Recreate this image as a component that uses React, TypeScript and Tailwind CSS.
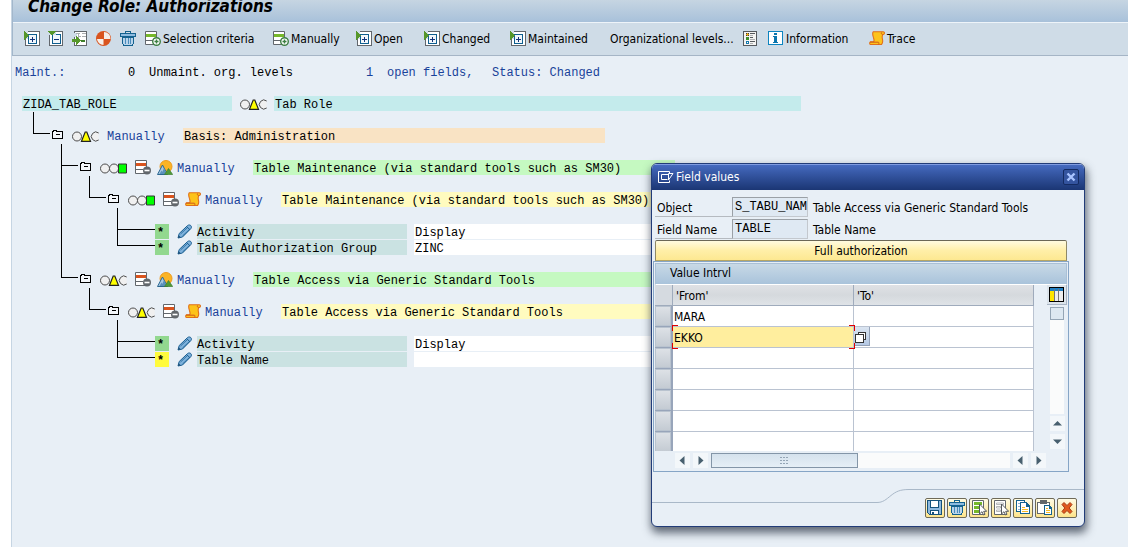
import { useState } from "react";
import type { ReactNode } from "react";

const UI = "font-['DejaVu_Sans_Condensed','DejaVu_Sans',sans-serif]";
const MONO = "font-['Liberation_Mono',monospace]";

type IconProps = { children: ReactNode; label?: string };

function Icon({ children, label }: IconProps) {
  return (
    <svg
      className="block h-4 w-4 shrink-0"
      viewBox="0 0 16 16"
      shapeRendering="crispEdges"
      role={label ? "img" : undefined}
      aria-label={label}
      aria-hidden={label ? undefined : true}
    >
      {children}
    </svg>
  );
}

function ExpandIcon() {
  return (
    <Icon>
      <rect x="1.5" y=".5" width="14" height="14" fill="#fff" stroke="#62676c" />
      <rect x="4.5" y="3.5" width="8" height="9" fill="#f2f7fb" stroke="#0f5f8f" />
      <path d="M8.500 6v5M6 8.500h5" stroke="#12337a" />
      <path d="M0 0h4v8H0z" fill="#cfdce7" />
      <path d="M0 0h1v1h1v1h1v1h1v1h1v1H4v1H3v1H2v1H1v1H0z" fill="#56972a" />
    </Icon>
  );
}

function CollapseIcon() {
  return (
    <Icon>
      <rect x="1.5" y=".5" width="13" height="14" fill="#fff" stroke="#62676c" />
      <rect x="4.5" y="3.5" width="8" height="9" fill="#f2f7fb" stroke="#0f5f8f" />
      <path d="M6 8.500h5" stroke="#12337a" />
      <path d="M0 0h8v4H0z" fill="#cfdce7" />
      <path d="M0 0h8v1H7v1H6v1H5v1H3V3H2V2H1V1H0z" fill="#56972a" />
    </Icon>
  );
}

function InsertTreeIcon() {
  return (
    <Icon>
      <rect x="2.5" y=".5" width="12" height="14" fill="#fff" stroke="#62676c" />
      <path d="M2 2h3v4H2z" fill="#cfdce7" />
      <path d="M4 2.500h4M10 2.500h4M6.500 2v5M7 5.500h2M10 5.500h4" stroke="#a9adb0" />
      <path d="M9 9h4v2H9z" fill="#3f7f2c" />
      <path d="M0 8h4V5h1v1h1v1h1v1h1v1h1v1H8v1H7v1H6v1H5v1H4v-3H0z" fill="#56972a" />
    </Icon>
  );
}

function QuarterIcon() {
  return (
    <svg className="block h-4 w-4 shrink-0" viewBox="0 0 16 16" aria-hidden>
      <circle cx="7.500" cy="7.500" r="7.500" fill="#d9541e" />
      <path d="M8 1a6.500 6.500 0 0 1 6.500 7H8zM7.500 14A6.500 6.500 0 0 1 1 8h6.500z" fill="#f6efe9" />
    </svg>
  );
}

function TrashIcon() {
  return (
    <Icon>
      <path d="M2.500 6h11v6l-1 2.500h-9l-1-2.500z" fill="#b9d4ea" stroke="#14628f" />
      <path d="M5.500 7v6M8 7v6M10.500 7v6" stroke="#4a8cbc" />
      <path d="M0 2h16v4H0z" fill="#14628f" />
      <path d="M1 3h14v2H1z" fill="#8dbbe0" />
      <path d="M5.500 2V.5h5V2" fill="none" stroke="#14628f" />
    </Icon>
  );
}

function RowAddIcon() {
  return (
    <svg className="block h-4 w-4 shrink-0" viewBox="0 0 16 16" aria-hidden>
      <path d="M.5.500h11v13H.5z" fill="#fff" stroke="#62676c" />
      <path d="M1 3h10v3H1z" fill="#76b82a" />
      <path d="M1 9.500h9" stroke="#62676c" />
      <circle cx="11.500" cy="10.500" r="3.800" fill="#fff" stroke="#3d7f42" strokeWidth="1.400" />
      <path d="M11.500 8.500v4M9.500 10.500h4" stroke="#3d7f42" strokeWidth="1.400" />
    </svg>
  );
}

function RowRemoveIcon() {
  return (
    <svg className="block h-4 w-4 shrink-0" viewBox="0 0 16 16" aria-hidden>
      <path d="M.5.500h11v13H.5z" fill="#fff" stroke="#62676c" />
      <path d="M1 3h10v3H1z" fill="#d9541e" />
      <path d="M1 9.500h7" stroke="#62676c" />
      <circle cx="12" cy="10.500" r="4" fill="#62676c" />
      <path d="M9.500 10.500h5" stroke="#fff" strokeWidth="1.600" />
    </svg>
  );
}

function LegendIcon() {
  return (
    <Icon>
      <rect x=".5" y=".5" width="13" height="14" fill="#f4f4f2" stroke="#55595d" />
      <path d="M3 2h3v3H3z" fill="#e8a81c" />
      <path d="M3 2h1v1H3zM5 2h1v1H5zM3 4h1v1H3zM5 4h1v1H5z" fill="#3b3b3b" />
      <path d="M3 6h3v3H3z" fill="#3f8f2c" />
      <path d="M3 10h3v3H3z" fill="#1678ac" />
      <path d="M4 11h1v1H4z" fill="#fff" />
      <path d="M7 2.500h5M7 6.500h3M7 10.500h5" stroke="#55595d" />
      <path d="M7 4.500h3M7 8.500h5M7 12.500h3" stroke="#b0b2b4" />
    </Icon>
  );
}

function InfoIcon() {
  return (
    <Icon>
      <rect x=".5" y=".5" width="14" height="13" fill="#fff" stroke="#0c84c0" />
      <path d="M6 2h3v2H6zM5 5h4v6h1v1H5v-1h1V6H5z" fill="#0a75ae" />
    </Icon>
  );
}

function ScrollIcon() {
  return (
    <svg className="block h-4 w-4 shrink-0" viewBox="0 0 16 16" aria-hidden>
      <path
        d="M4.200.8h10c1 0 1.400.8 1.200 1.700-.2 1-.9 1.200-1.700 1.200-.8 1.500-.6 3-.2 4.600.4 2 .4 3.700-1 5.200H1.400C.5 13.500.3 11 1.500 10.700h3.200c.6-1.300.3-2.700-.2-4C3.900 4.800 3 2.200 4.200.8z"
        fill="#fdc31a"
        stroke="#e0701c"
        strokeWidth="1.100"
      />
      <path d="M1 11.200h8.500c.6.700.5 1.700-.2 2.300" fill="none" stroke="#cf5a1a" />
      <path d="M12.500 1.500c-.6.900.1 2 1.200 2" fill="none" stroke="#cf5a1a" />
    </svg>
  );
}

function MountainIcon() {
  return (
    <svg className="block h-4 w-4 shrink-0" viewBox="0 0 16 16" aria-hidden>
      <circle cx="9" cy="6.500" r="6" fill="#fbb425" stroke="#ee9a1e" />
      <path d="M.5 14.500 5.500 5l5 9.500z" fill="#a8c8e2" stroke="#2a6791" />
      <path d="m2.500 14 2-3.500.8 1.500L7 8l3 6z" fill="#5a91bb" />
      <path d="m7.500 14.500 4-6 4.200 6z" fill="#4f9a38" stroke="#3d7f30" strokeWidth=".7" />
    </svg>
  );
}

function PencilIcon() {
  return (
    <svg className="block h-4 w-4 shrink-0" viewBox="0 0 16 16" aria-hidden>
      <path d="m1 14 1.200-4.500L10.500 1.600c1-.9 2.600-.8 3.300 0 .9.900.8 2.100 0 3.100L5.500 13z" fill="#7fb2dc" stroke="#1b5f92" />
      <path d="m3.500 10 7.500-7M5.500 12l7.500-7" stroke="#1b5f92" strokeWidth=".8" />
      <path d="m1 14 .7-2.700 2 2z" fill="#1b4d74" />
      <path d="m9.500 2.500 3.400 3.200" stroke="#1b5f92" />
    </svg>
  );
}

function FolderIcon() {
  return (
    <svg className="block h-[9px] w-3 shrink-0" viewBox="0 0 12 9" shapeRendering="crispEdges" aria-hidden>
      <path d="M.5 8V1.500h1V.5h3v1h6V8z" fill="#f3f6fa" stroke="#000" />
      <path d="M4 4.500h4" stroke="#000" />
    </svg>
  );
}

type Light = "yellow" | "green";

function TrafficLight({ state }: { state: Light }) {
  return (
    <svg className="block h-[11px] w-7 shrink-0" viewBox="0 0 28 11" role="img" aria-label={state + " light"}>
      <circle cx="5" cy="5.500" r="4.500" fill="#f0f0f0" stroke="#4d4d4d" />
      {state === "yellow" ? (
        <>
          <path d="M26.700 2a4.500 4.500 0 1 0 0 7" fill="#f0f0f0" stroke="#4d4d4d" />
          <path d="M9.500 10.300 13.200 1h1.600l3.700 9.300z" fill="#ff0" stroke="#222" strokeWidth="1.200" />
        </>
      ) : (
        <>
          <circle cx="14" cy="5.500" r="4.500" fill="#f0f0f0" stroke="#4d4d4d" />
          <path d="M18.500 1h8v9h-8z" fill="#0f0" stroke="#333" />
        </>
      )}
    </svg>
  );
}

function ToolButton({ icon, text, label, className }: { icon?: ReactNode; text?: string; label?: string; className?: string }) {
  return (
    <button
      type="button"
      aria-label={label}
      className={`flex h-6 shrink-0 items-center gap-0.5 whitespace-nowrap text-[12px] leading-4 text-black ${className ?? ""}`}
    >
      {icon}
      {text && <span>{text}</span>}
    </button>
  );
}

type Guide = "none" | "line" | "tee" | "elbow";

function GuideCell({ kind, last, leaf, short }: { kind: Guide; last: boolean; leaf: boolean; short: boolean }) {
  const width = last ? (leaf ? "w-[38px]" : "w-[19px]") : "w-7";
  const joined = kind === "tee" || kind === "elbow";
  const arm = leaf ? "w-full" : "w-[17px]";
  return (
    <span className={`flex h-full shrink-0 flex-col ${width}`}>
      <span
        className={`${short ? "h-1.5" : "h-[22px]"} ${arm} ${kind !== "none" ? "border-l border-black" : ""} ${joined ? "border-b" : ""}`}
      />
      <span className={`flex-1 ${kind === "line" || kind === "tee" ? "border-l border-black" : ""}`} />
    </span>
  );
}

type Node = {
  guides: Guide[];
  short?: boolean;
  light?: Light;
  kind: "class" | "object" | "auth" | "field";
  text: string;
  value?: string;
  open?: boolean;
};

const nodes: Node[] = [
  { guides: ["elbow"], light: "yellow", kind: "class", text: "Basis: Administration" },
  { guides: ["none", "tee"], light: "green", kind: "object", text: "Table Maintenance (via standard tools such as SM30)" },
  { guides: ["none", "line", "elbow"], light: "green", kind: "auth", text: "Table Maintenance (via standard tools such as SM30)" },
  { guides: ["none", "line", "none", "tee"], kind: "field", text: "Activity", value: "Display" },
  { guides: ["none", "line", "none", "elbow"], short: true, kind: "field", text: "Table Authorization Group", value: "ZINC" },
  { guides: ["none", "elbow"], light: "yellow", kind: "object", text: "Table Access via Generic Standard Tools" },
  { guides: ["none", "none", "elbow"], light: "yellow", kind: "auth", text: "Table Access via Generic Standard Tools" },
  { guides: ["none", "none", "none", "tee"], kind: "field", text: "Activity", value: "Display" },
  { guides: ["none", "none", "none", "elbow"], short: true, kind: "field", text: "Table Name", value: "", open: true },
];

const barTone = {
  class: "w-[422px] bg-[#f9e3c4]",
  object: "w-[422px] bg-[#c5f9c1]",
  auth: "w-[422px] bg-[#fffbbf]",
  field: "",
};

function TreeRow({ node }: { node: Node }) {
  const leaf = node.kind === "field";
  return (
    <li className={`flex ${node.short ? "h-4" : "h-8"}`}>
      {node.guides.map((g, i) => (
        <GuideCell key={i} kind={g} last={i === node.guides.length - 1} leaf={leaf} short={!!node.short} />
      ))}
      <div className="flex h-4 items-center self-end whitespace-nowrap leading-[18px]">
        {leaf ? (
          <>
            <span className={`mb-px h-[15px] w-3.5 pl-0.5 font-bold ${node.open ? "bg-[#fffb3c]" : "bg-[#92d88f]"}`}>*</span>
            <span className="ml-2 mr-1">
              <PencilIcon />
            </span>
            <span className="mb-px h-[15px] w-[210px] bg-[#cae2e2]">{node.text}</span>
            <span className="mb-px ml-[7px] h-[15px] w-[280px] bg-white pl-px">{node.value}</span>
          </>
        ) : (
          <>
            <button type="button" aria-label={`Collapse ${node.text}`} className="mb-1 mr-2">
              <FolderIcon />
            </button>
            <TrafficLight state={node.light ?? "yellow"} />
            {node.kind !== "class" && (
              <span className="ml-[7px] flex gap-[6px]">
                <RowRemoveIcon />
                {node.kind === "object" ? <MountainIcon /> : <ScrollIcon />}
              </span>
            )}
            <span className={`h-4 w-[73px] text-[#19429a] ${node.kind === "class" ? "ml-[7px]" : "ml-1"}`}>Manually</span>
            <span className={`mb-px ml-[3px] h-[15px] pl-px ${barTone[node.kind]}`}>{node.text}</span>
          </>
        )}
      </div>
    </li>
  );
}

function Arrow({ dir }: { dir: "left" | "right" | "up" | "down" }) {
  const d = {
    left: "M9.500 3v9L4.500 7.500z",
    right: "M5.500 3v9l5-4.500z",
    up: "M3 9.500h9L7.500 5z",
    down: "M3 5.500h9L7.500 10z",
  }[dir];
  return (
    <button type="button" aria-label={`Scroll ${dir}`} className="h-[15px] w-[15px] shrink-0 bg-[#f3f7fa]">
      <svg className="block h-full w-full" viewBox="0 0 15 15" aria-hidden>
        <path d={d} fill="#48606f" />
      </svg>
    </button>
  );
}

function SaveIcon() {
  return (
    <Icon>
      <path d="M.5.500h14v14h-12l-2-2z" fill="#8db8de" stroke="#14527c" />
      <path d="M3.500.500h8v7h-8z" fill="#fff" stroke="#14527c" />
      <path d="M3.500 10.500h8v4h-8z" fill="#fff" stroke="#14527c" />
      <path d="M5 12h2v2H5z" fill="#14527c" />
    </Icon>
  );
}

function SelectIcon({ on }: { on: boolean }) {
  return (
    <svg className="block h-4 w-4" viewBox="0 0 16 16" aria-hidden>
      <path d="M1.500.5h11v14h-11z" fill="#fff" stroke="#62676c" />
      {on ? (
        <path d="M3 2h8v3H3zM3 6h5v3H3zM3 10h5v3H3z" fill="#76b82a" />
      ) : (
        <path d="M3.500 3h7v1.500h-7zM3.500 6.500h4v1.500h-4zM3.500 10h4v1.500h-4z" fill="#fff" stroke="#a4a7aa" strokeWidth=".8" />
      )}
      <path d="M8.500 4v10l2.500-2.300L12.500 15l1.500-.7-1.300-3h3z" fill="#fff" stroke="#55595d" />
    </svg>
  );
}

function CopyIcon() {
  return (
    <Icon>
      <path d="M1.500.5h8v11h-8z" fill="#fff" stroke="#14628f" />
      <path d="M3 3.500h2M3 6.500h2M3 9.500h2" stroke="#8db5d4" />
      <path d="M5.500 2.500h6v1h1v1h1v1h1v8h-9z" fill="#fff" stroke="#14628f" />
      <path d="M11 3h1v1h1v1h1v2h-3z" fill="#14628f" />
      <path d="M7 7.500h3M7 9.500h6M7 11.500h6" stroke="#f5ba22" />
    </Icon>
  );
}

function PasteIcon() {
  return (
    <Icon>
      <path d="M.5 2.500h12v11H.5z" fill="#fff" stroke="#62676c" />
      <path d="M3 0h7v4H3z" fill="#62676c" />
      <path d="M7.500 5.500h5v1h1v1h1v7h-7z" fill="#fff" stroke="#14628f" />
      <path d="M12 6h1v1h1v2h-2z" fill="#14628f" />
      <path d="M9 8.500h2M9 10.500h4M9 12.500h4" stroke="#f5ba22" />
    </Icon>
  );
}

function CancelIcon() {
  return (
    <svg className="block h-4 w-4" viewBox="0 0 16 16" aria-hidden>
      <path d="m3 4.500 2-2L8 5.500l3-3 2 2L10.200 8l2.800 3.500-2 2-3-3-3 3-2-2L5.800 8z" fill="#e05a1c" stroke="#a83a16" />
    </svg>
  );
}

const actions: [string, ReactNode][] = [
  ["Save", <SaveIcon />],
  ["Delete", <TrashIcon />],
  ["Select all", <SelectIcon on />],
  ["Deselect all", <SelectIcon on={false} />],
  ["Copy", <CopyIcon />],
  ["Paste", <PasteIcon />],
  ["Cancel", <CancelIcon />],
];

function Corner({ className }: { className: string }) {
  return <span className={`pointer-events-none absolute z-10 h-1.5 w-1.5 border-[#e00000] ${className}`} />;
}

function ValueTable() {
  const [rows, setRows] = useState([["MARA", ""], ["EKKO", ""], ["", ""], ["", ""], ["", ""], ["", ""], ["", ""]]);
  const edit = (r: number, c: number, v: string) =>
    setRows(rows.map((row, i) => (i === r ? row.map((x, j) => (j === c ? v : x)) : row)));
  return (
    <table className="w-[379px] table-fixed border-separate border-spacing-0">
      <colgroup>
        <col className="w-[18px]" />
        <col className="w-[181px]" />
        <col className="w-[180px]" />
      </colgroup>
      <thead>
        <tr className="h-[21px]">
          <th aria-label="Row" className="border-b border-r border-[#9fabbc] bg-[#d5dae0] p-0" />
          {["'From'", "'To'"].map((h) => (
            <th
              key={h}
              scope="col"
              className="border-b border-r border-[#9fabbc] bg-linear-to-b from-[#dfe1e5] via-[#d5d9dd] to-[#dfe3e7] p-0 pl-[3px] pt-0.5 text-left font-normal"
            >
              {h}
            </th>
          ))}
        </tr>
      </thead>
      <tbody>
        {rows.map((row, r) => (
          <tr key={r} className="h-[21px]">
            <td className="border-b border-r-2 border-[#98a5ba] p-0">
              <button
                type="button"
                aria-label={`Select row ${r + 1}`}
                className="block h-5 w-full border border-[#b9c3cf] bg-linear-to-b from-[#dde1e6] to-[#c4cbd3]"
              />
            </td>
            {row.map((v, c) => {
              const current = r === 1 && c === 0;
              return (
                <td key={c} className={`relative border-b border-r border-[#bac3d1] p-0 ${current ? "bg-[#ffee9e]" : "bg-white"}`}>
                  <input
                    value={v}
                    onChange={(e) => edit(r, c, e.target.value)}
                    aria-label={`${c === 0 ? "From" : "To"} ${r + 1}`}
                    className="block h-5 w-full bg-transparent pl-px pt-0.5 outline-none"
                  />
                  {current && (
                    <>
                      <Corner className="-left-px -top-0.5 border-l border-t" />
                      <Corner className="-right-0.5 -top-0.5 border-r border-t" />
                      <Corner className="-bottom-0.5 -left-px border-b border-l" />
                      <Corner className="-bottom-0.5 -right-0.5 border-b border-r" />
                    </>
                  )}
                  {r === 1 && c === 1 && (
                    <button
                      type="button"
                      aria-label="Possible entries"
                      className="absolute left-0 top-0 h-[19px] w-4 border-b border-r border-[#94a2b8] bg-linear-to-b from-[#dbe5f1] to-[#b4c8e4]"
                    >
                      <svg className="block h-4 w-4" viewBox="0 0 16 16" shapeRendering="crispEdges" aria-hidden>
                        <path d="M4.500 4.500h7v7h-7z" fill="#fff" stroke="#333" />
                        <path d="M1.500 6.500h8v8h-8z" fill="#fff" stroke="#333" />
                      </svg>
                    </button>
                  )}
                </td>
              );
            })}
          </tr>
        ))}
      </tbody>
    </table>
  );
}

function FieldValuesDialog() {
  const fields = [
    ["Object", "S_TABU_NAM", "Table Access via Generic Standard Tools"],
    ["Field Name", "TABLE", "Table Name"],
  ];
  return (
    <section
      role="dialog"
      aria-labelledby="dialog-title"
      className={`absolute left-[651px] top-[163px] w-[434px] overflow-hidden rounded-md border border-[#223c78] bg-[#e8eff6] text-[12px] leading-4 text-black shadow-[1px_5px_9px_1px_rgba(40,50,65,0.7)] ${UI}`}
    >
      <header className="flex h-[26px] items-center border-t border-[#7f9be0] bg-linear-to-b from-[#456abf] to-[#1b3674] pb-0.5 pl-1.5 pr-[5px] text-white">
        <svg className="mr-0.5 block h-3.5 w-4" viewBox="0 0 16 14" fill="none" stroke="#fff" aria-hidden>
          <path d="M11.500 3.500v-2h-11v11h11v-2" />
          <path d="M3.500 4.500h7M3.500 9.500h6M3.500 4.500v5M10.500 3.500h4.500l-4.500 6.500z" />
        </svg>
        <h2 id="dialog-title" className="flex-1">
          Field values
        </h2>
        <button type="button" aria-label="Close" className="flex h-4 w-4 items-center justify-center rounded-xs border border-[#142b62] bg-[#34549f]">
          <svg className="block h-2.5 w-2.5" viewBox="0 0 10 10" aria-hidden>
            <path d="m1.500 1.500 7 7M8.500 1.500l-7 7" stroke="#a9c4ff" strokeWidth="2.400" />
          </svg>
        </button>
      </header>

      <div className="px-[3px] pt-[7px]">
        {fields.map(([label, value, description], i) => (
          <div key={label} className="flex h-[22px] items-start">
            <label htmlFor={`field-${i}`} className="h-5 w-[77px] border-b border-[#b5bac0] pl-0.5 pt-[3px]">
              {label}
            </label>
            <input
              id={`field-${i}`}
              readOnly
              value={value}
              className={`h-5 w-[76px] border border-b-[#c3c8ce] border-l-[#9aa0a6] border-r-[#c3c8ce] border-t-[#9aa0a6] bg-[#dfe9f3] pl-0.5 text-[12px] outline-none ${MONO}`}
            />
            <span className="pl-[5px] pt-[3px]">{description}</span>
          </div>
        ))}
        <button
          type="button"
          className="-mt-px block h-[21px] w-[412px] rounded-t-xs border border-b-[#b7a663] border-l-[#8f8967] border-r-[#8f8967] border-t-[#6b6857] bg-linear-to-b from-[#fffbe0] via-[#ffefa8] to-[#fde891] pt-px"
        >
          Full authorization
        </button>
      </div>

      <div className="mx-px w-[416px] border border-[#86a5c6] p-px">
        <h3 className="h-[22px] border border-[#a9c0d6] border-b-white bg-linear-to-b from-[#c8d9e6] to-[#a9c3db] pl-3.5 leading-[18px]">Value Intrvl</h3>
        <div className="flex justify-between">
          <div className="h-[166px] overflow-hidden">
            <ValueTable />
          </div>
          <div className="flex flex-col items-center pb-0.5">
            <button type="button" aria-label="Configure columns" className="flex h-5 w-5 items-center justify-center border-b border-r border-[#a9b5c4] bg-[#dbe3ea]">
              <svg className="block h-[15px] w-[15px]" viewBox="0 0 15 15" shapeRendering="crispEdges" aria-hidden>
                <path d="M0 0h15v15H0z" fill="#000" />
                <path d="M1 1h13v3H1z" fill="#1f7fc4" />
                <path d="M1 4h4v10H1z" fill="#ffe600" />
                <path d="M6 4h3v10H6zM10 4h4v10h-4z" fill="#eee" />
                <path d="M5.500 2v12M9.500 2v12" stroke="#777" />
              </svg>
            </button>
            <div className="mb-0.5 mt-0.5 flex-1 bg-[#fafbfb]">
              <div className="h-[13px] w-3.5 border border-[#94a5b5] bg-[#dde8f1]" />
            </div>
            <Arrow dir="up" />
            <span className="h-[3px]" />
            <Arrow dir="down" />
          </div>
        </div>
        <div className="flex h-[19px] items-center gap-[3px] pl-5 pr-[21px]">
          <Arrow dir="left" />
          <Arrow dir="right" />
          <div className="flex-1 bg-[#fafbfb]">
            <div className="flex h-[15px] w-[147px] items-center justify-center border border-[#8496a8] bg-linear-to-b from-[#d5e2ed] to-[#e6eff6]">
              <svg className="block h-2 w-2.5" viewBox="0 0 10 8" fill="#94a5b5" shapeRendering="crispEdges" aria-hidden>
                <path d="M0 0h2v1H0zM3 0h2v1H3zM6 0h2v1H6zM0 3h2v1H0zM3 3h2v1H3zM6 3h2v1H6zM0 6h2v1H0zM3 6h2v1H3zM6 6h2v1H6z" />
              </svg>
            </div>
          </div>
          <Arrow dir="left" />
          <Arrow dir="right" />
        </div>
      </div>

      <footer className="mt-[17px] flex h-[37px]">
        <span className="h-3.5 flex-1 border-b border-[#a9b8c8]" />
        <svg className="block h-3.5 w-8 shrink-0" viewBox="0 0 32 14" fill="none" aria-hidden>
          <path d="M0 13.500c6 0 9-3 14-7s9-6 18-6" stroke="#a9b8c8" />
        </svg>
        <div className="flex gap-0.5 border-t border-[#a9b8c8] pl-4 pr-[7px] pt-2">
          {actions.map(([label, icon]) => (
            <button
              key={label}
              type="button"
              aria-label={label}
              className="flex h-5 w-5 items-center justify-center rounded-xs border border-[#6f6a58] bg-linear-to-b from-[#fffbe3] to-[#fde48a]"
            >
              {icon}
            </button>
          ))}
        </div>
      </footer>
    </section>
  );
}

export default function App() {
  return (
    <div className="relative min-h-screen overflow-hidden bg-white pl-[11px]">
      <main className="min-h-screen border-l border-[#c6d5e3] bg-[#e8eff6]">
        <header className={`border-l border-[#a3b7cb] ${UI}`}>
          <div className="flex h-[23px] items-start border-b border-[#eef4f9] bg-linear-to-b from-[#c6d5e2] to-[#a8c1da] pl-[15px]">
            <h1 className="-mt-1 whitespace-nowrap text-[17px] font-bold italic leading-5 text-black">Change Role: Authorizations</h1>
          </div>
          <nav className="flex h-[33px] items-center border-b border-[#a5b5c6] bg-[#cfdce7] pl-[11px]">
            <div className="flex w-[121px] gap-2">
              <ToolButton icon={<ExpandIcon />} label="Expand node" />
              <ToolButton icon={<CollapseIcon />} label="Collapse node" />
              <ToolButton icon={<InsertTreeIcon />} label="Subtree" />
              <ToolButton icon={<QuarterIcon />} label="Status" />
              <ToolButton icon={<TrashIcon />} label="Delete" />
            </div>
            <ToolButton className="w-32" icon={<RowAddIcon />} text="Selection criteria" />
            <ToolButton className="w-[83px]" icon={<RowAddIcon />} text="Manually" />
            <ToolButton className="w-[68px]" icon={<ExpandIcon />} text="Open" />
            <ToolButton className="w-[86px]" icon={<ExpandIcon />} text="Changed" />
            <ToolButton className="w-[100px]" icon={<ExpandIcon />} text="Maintained" />
            <ToolButton className="w-[133px]" text="Organizational levels..." />
            <ToolButton className="w-[25px]" icon={<LegendIcon />} label="Legend" />
            <ToolButton className="w-[101px]" icon={<InfoIcon />} text="Information" />
            <ToolButton icon={<ScrollIcon />} text="Trace" />
          </nav>
        </header>

        <div className={`text-[12px] text-black ${MONO}`}>
          <p className="flex h-6 whitespace-nowrap pl-[3px] pt-2 leading-[18px] text-[#19429a]">
            <span className="w-[113px]">Maint.:</span>
            <span className="w-[21px] text-black">0</span>
            <span className="w-[217px] text-black">Unmaint. org. levels</span>
            <span className="w-[21px]">1</span>
            <span className="w-[105px]">open fields,</span>
            <span>Status: Changed</span>
          </p>

          <div className="mt-4 flex h-4 items-center whitespace-nowrap pl-2.5 leading-[18px]">
            <span className="mb-px h-[15px] w-[210px] bg-[#c4ebec] pl-px">ZIDA_TAB_ROLE</span>
            <span className="ml-2 mr-1.5">
              <TrafficLight state="yellow" />
            </span>
            <span className="mb-px h-[15px] w-[527px] bg-[#c4ebec] pl-px">Tab Role</span>
          </div>

          <ul className="pl-[21px]">
            {nodes.map((n, i) => (
              <TreeRow key={i} node={n} />
            ))}
          </ul>
        </div>
      </main>
      <FieldValuesDialog />
    </div>
  );
}
